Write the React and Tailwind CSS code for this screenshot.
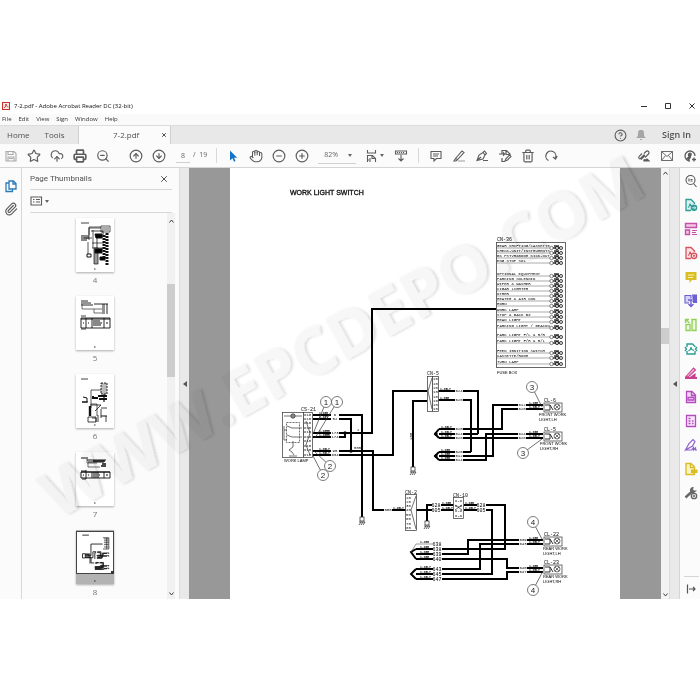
import {
  Star,
  CloudUpload,
  Printer,
  ZoomOut,
  CircleArrowUp,
  CircleArrowDown,
  Hand,
  CircleMinus,
  CirclePlus,
  Trash2,
  CircleHelp,
  Paperclip,
  X,
} from "lucide-react";

const fuseRows = [
  ["GEAR SHIFTING/CASSETTE", 247],
  ["CHECK-UNIT/INSTRUMENTS", 252],
  ["BK PSTVR&BOOM KICK-OUT", 257],
  ["ENG STOP SOL", 262],
  ["OPTIONAL EQUIPMENT", 275],
  ["PARKING SOLENOID", 280],
  ["WIPER & WASHER", 285],
  ["CIGAR LIGHTER", 290],
  ["OTHER", 295],
  ["HEATER & AIR CON", 300],
  ["HORN", 305],
  ["WORK LAMP", 311],
  ["STOP & BACK BZ", 316],
  ["HEAD LIGHT", 321],
  ["PARKING LIGHT / BEACON", 327],
  ["PARK LIGHT F/L & R/R", 336],
  ["PARK LIGHT F/R & R/L", 342],
  ["FEED IGNITION SWITCH", 352],
  ["CASSETTE/ROOM", 357],
  ["TURN LAMP", 363],
];

// every heavy wire on the sheet, in page coordinates
const wires = [
  "M313 415H362V517",
  "M313 419H351V451",
  "M313 433H372V309H496",
  "M313 437H345V433",
  "M313 451H373V510H406",
  "M313 455H393V391H427",
  "M427 401H413V467",
  "M438 391H478V434",
  "M438 400H471V452",
  "M439 429H502V409H543",
  "M439 434H478",
  "M439 438H543",
  "M439 452H471",
  "M439 456H493V405H543",
  "M439 460H486V434H543",
  "M416 510H454",
  "M427 521V505H454",
  "M464 505H505V549H416",
  "M464 510H492V574H416",
  "M416 554H468V540H543",
  "M416 559H507V568H543",
  "M416 569H480V544H543",
  "M416 579H507V572H543",
  "M439 429L435 434L439 438",
  "M439 452L435 456L439 460",
  "M416 549L411 552L416 559",
  "M416 569L411 574L416 579",
];

const wireLabels = [
  ["6", 335, 415], ["52", 335, 419], ["173", 335, 433], ["174", 335, 437],
  ["95", 335, 451], ["634", 335, 455], ["505", 388, 510],
  ["624", 459, 391], ["626", 459, 400],
  ["620", 459, 429], ["624", 459, 434], ["628", 459, 438],
  ["626", 459, 452], ["612", 459, 456], ["614", 459, 460],
  ["612", 522, 405], ["620", 522, 409], ["614", 522, 434], ["628", 522, 438],
  ["639", 523, 540], ["643", 523, 544], ["640", 523, 568], ["647", 523, 572],
];

// wires further apart carry a larger number
const wideLabels = [
  ["628", 436, 505], ["605", 436, 510], ["628", 481, 505], ["605", 481, 510],
  ["638", 437, 544], ["638", 437, 549], ["639", 437, 554], ["640", 437, 559],
  ["643", 437, 569], ["645", 437, 574], ["647", 437, 579],
];

const gauges = [
  ["1.25B", 319, 414], ["1.25Y", 319, 418], ["1.25RB", 319, 432], ["1.25RB", 319, 436],
  ["1.25LY", 319, 450], ["1.25LY", 319, 454], ["1.25LY", 393, 509],
  ["1.25LY", 440, 390], ["1.25B", 440, 399],
  ["1.25LY", 441, 428], ["1.25LY", 441, 433], ["1.25LY", 441, 437],
  ["1.25B", 441, 451], ["1.25B", 441, 455], ["1.25B", 441, 459],
  ["1.25B", 529, 404], ["1.25LY", 529, 408], ["1.25B", 529, 433], ["1.25LY", 529, 437],
  ["1.25B", 442, 504], ["1.25LY", 442, 509], ["1.25B", 465, 504], ["1.25LY", 465, 509],
  ["1.25B", 420, 543], ["1.25B", 420, 548], ["1.25B", 420, 553], ["1.25B", 420, 558],
  ["1.25LY", 420, 568], ["1.25LY", 420, 573], ["1.25LY", 420, 578],
  ["1.25B", 529, 539], ["1.25LY", 529, 543], ["1.25B", 529, 567], ["1.25LY", 529, 571],
];

const lamps = [
  { name: "CL-6", y: 403, line1: "FRONT WORK", line2: "LIGHT,LH", tx: 539 },
  { name: "CL-5", y: 432, line1: "FRONT WORK", line2: "LIGHT,RH", tx: 540 },
  { name: "CL-22", y: 537, line1: "REAR WORK", line2: "LIGHT,LH", tx: 543 },
  { name: "CL-23", y: 565, line1: "REAR WORK", line2: "LIGHT,RH", tx: 543 },
];

const callouts = [
  ["1", 326, 402, 313, 434],
  ["1", 337, 402, 315, 438],
  ["2", 330, 466, 314, 451],
  ["2", 323, 475, 313, 456],
  ["3", 532, 387, 542, 407],
  ["3", 523, 453, 542, 439],
  ["4", 533, 522, 543, 541],
  ["4", 533, 590, 543, 571],
];

function Ground({ x, y }) {
  return (
    <g stroke="#222" strokeWidth="0.7" fill="none">
      <rect x={x - 2} y={y - 1} width="4" height="4" fill="#fff" />
      <path d={`M${x - 3} ${y + 4}h6M${x - 3} ${y + 7}l2-3M${x - 1} ${y + 7}l2-3M${x + 1} ${y + 7}l2-3`} />
    </g>
  );
}

function Diagram() {
  return (
    <svg viewBox="230 168 390 431" className="block w-[390px] shrink-0 bg-white" role="img" aria-label="Work light switch wiring diagram">
      <text x="290" y="195" fontSize="7" stroke="#111" strokeWidth="0.3" className="font-['Liberation_Sans',sans-serif]">WORK LIGHT SWITCH</text>

      {/* fuse box */}
      <g className="font-['Liberation_Mono',monospace]" fill="#000">
        <text x="497" y="241" fontSize="5">CN-36</text>
        <rect x="496.5" y="242.5" width="69" height="125" fill="none" stroke="#444" strokeWidth="0.8" />
        {fuseRows.map(([label, y]) => (
          <g key={label}>
            <text x="497" y={y} fontSize="4">{label}</text>
            <path d={`M496 ${y + 1}h54`} stroke="#555" strokeWidth="0.5" />
            <path d={`M553 ${y + 1}h8M554 ${y - 1}h5`} stroke="#333" strokeWidth="1.3" />
            <circle cx="551.5" cy={y + 1} r="1.7" fill="#fff" stroke="#333" strokeWidth="0.6" />
            <circle cx="557" cy={y + 1} r="1.6" fill="#ccc" stroke="#111" strokeWidth="0.8" />
            <circle cx="561" cy={y + 1} r="1.6" fill="#ccc" stroke="#111" strokeWidth="0.7" />
          </g>
        ))}
      </g>

      <g fill="none" stroke="#000" strokeWidth="2">
        {wires.map((d) => <path key={d} d={d} />)}
      </g>
      <path d="M411 552L416 544H433" fill="none" stroke="#555" strokeWidth="0.6" />
      <circle cx="345" cy="433" r="1.7" />
      <circle cx="351" cy="451" r="1.7" />
      <circle cx="436" cy="434" r="1.7" />
      <circle cx="436" cy="456" r="1.7" />

      {/* work lamp switch */}
      <g fill="none" stroke="#333" strokeWidth="0.7">
        <rect x="282.5" y="412.5" width="21" height="45" />
        <rect x="303.5" y="412.5" width="9" height="45" fill="#fff" />
        <path d="M284 416h18M289 456h8M293 441v6l-4 3 3 2 2 3" />
        <path d="M286.5 422.500h13v20h-13z" strokeDasharray="2 1" />
        <path d="M287 426l5 2h10M287 435l5 2h10M284 426v14M284 430h3M284 440h3" />
        <circle cx="293" cy="416" r="2.2" fill="#888" />
        <path d="M306 421l4 12-4 12 4 10" />
      </g>
      <g className="font-['Liberation_Mono',monospace]" fontSize="4" fill="#111">
        <text x="301" y="411" fontSize="5">CS-21</text>
        {[416, 420, 424, 429, 433, 438, 442, 447, 451, 456].map((y) => (
          <text key={y} x="304" y={y}>o10</text>
        ))}
      </g>

      {/* connectors */}
      <g fill="#fff" stroke="#333" strokeWidth="0.7">
        <rect x="427.5" y="376.5" width="5" height="35" />
        <path d="M432 378l-4 13 4 18" />
        <rect x="432.5" y="376.5" width="6" height="35" />
        <rect x="405.5" y="494.5" width="11" height="36" />
        <path d="M416 496l-5 14 5 19" />
        <rect x="453.5" y="497.5" width="10" height="21" />
        <path d="M455 505l7 5M455 510l7-5" />
      </g>
      <g className="font-['Liberation_Mono',monospace]" fontSize="4" fill="#111">
        <text x="427" y="375" fontSize="5">CN-5</text>
        <text x="405" y="494" fontSize="5">CN-2</text>
        <text x="453" y="497" fontSize="5">CN-10</text>
        {[380, 385, 389, 393, 398, 402, 406, 410].map((y) => <text key={y} x="433" y={y}>10</text>)}
        {[499, 503, 507, 511, 516, 520, 525, 529].map((y, i) => <text key={y} x="406" y={y}>{i + 1}0</text>)}
        {[502, 507, 512, 517].map((y) => <text key={y} x="455" y={y}>o-o</text>)}
        <text x="412" y="440" transform="rotate(-90 412 440)">100</text>
        <text x="357" y="431">2</text>
        <text x="354" y="449">505</text>
      </g>

      <g className="font-['Liberation_Mono',monospace]" fontSize="4" fill="#000">
        {gauges.map(([label, x, y]) => (
          <text key={`${x}-${y}`} x={x} y={y} fontSize="3" stroke="#000" strokeWidth="0.1">{label}</text>
        ))}
        {wireLabels.map(([label, x, y]) => (
          <g key={`${x}-${y}`}>
            <rect x={x - 4} y={y - 2} width="8" height="4" fill="#fff" />
            <text x={x} y={y + 1} textAnchor="middle">{label}</text>
          </g>
        ))}
        {wideLabels.map(([label, x, y]) => (
          <g key={`${x}-${y}`}>
            <rect x={x - 4} y={y - 2} width="9" height="4" fill="#fff" />
            <text x={x} y={y + 2} fontSize="5" textAnchor="middle">{label}</text>
          </g>
        ))}
      </g>

      {lamps.map(({ name, y, line1, line2, tx }) => (
        <g key={name}>
          <g fill="#fff" stroke="#333" strokeWidth="0.7">
            <rect x="544" y={y} width="18" height="9" />
            <path d={`M545 ${y + 2}h5v5h-5M550 ${y + 2}l3 5`} strokeWidth="1" />
            <circle cx="557" cy={y + 4} r="3" />
            <path d={`M555 ${y + 2}l4 4M559 ${y + 2}l-4 4`} />
          </g>
          <text x="544" y={y - 1} fontSize="5" className="font-['Liberation_Mono',monospace]">{name}</text>
          <g fontSize="4" className="font-['Liberation_Sans',sans-serif]">
            <text x={tx} y={y + 13}>{line1}</text>
            <text x={tx} y={y + 18}>{line2}</text>
          </g>
        </g>
      ))}

      <Ground x={362} y={518} />
      <Ground x={413} y={468} />
      <Ground x={427} y={522} />

      <g fontSize="4" className="font-['Liberation_Sans',sans-serif]">
        <text x="497" y="374">FUSE BOX</text>
        <text x="284" y="462">WORK LAMP</text>
      </g>

      {callouts.map(([n, cx, cy, x2, y2]) => (
        <g key={`${cx}-${cy}`}>
          <path d={`M${cx} ${cy}L${x2} ${y2}`} stroke="#333" strokeWidth="0.7" />
          <circle cx={cx} cy={cy} r="5.5" fill="#fff" stroke="#444" strokeWidth="0.7" />
          <text x={cx} y={cy + 3} fontSize="8" textAnchor="middle" fill="#222" className="font-['Liberation_Sans',sans-serif]">{n}</text>
        </g>
      ))}
    </svg>
  );
}

const sheet4 = (
  <g fill="none" stroke="#111">
    <path d="M5 5h8" strokeWidth="0.8" />
    <path d="M13 22V9h12M12 24v12M17 12v18M8 20h8M16 25h12M13 17v-7h12M16 30h14" strokeWidth="0.7" />
    <path d="M15 13h12v6h-6v12h6" strokeWidth="0.8" />
    <path d="M25 8h9v6h-9zM26 10h7M26 12h7" strokeWidth="0.7" />
    <path d="M5 18h8M5 20h8M5 22h6M11 36h4v3h-4z" strokeWidth="1" />
    <path d="M18 30h4v16h-4z" fill="#999" strokeWidth="0.7" />
    <path d="M19 16h7v4h-6zM19 31h7v4h-7zM24 39h5v3h-5z" fill="#000" />
    <path d="M31 15v33M28 17v24" strokeWidth="3" strokeDasharray="2 1" />
  </g>
);

const sheet5 = (
  <g fill="none" stroke="#111">
    <path d="M5 5h7M5 7h10M5 9h12M18 8h14" strokeWidth="0.9" />
    <path d="M6 8v5h20M18 13v4h8" strokeWidth="0.6" />
    <path d="M26 9h6M26 11h6M26 13h6M26 15h6M26 17h6" strokeWidth="0.9" strokeDasharray="3 1" />
    <path d="M5 22h29v10H5zM10 22v10M16 22v10M28 22v10" strokeWidth="0.9" />
    <path d="M5 23h29M17 25h7M17 27h9M17 29h8M7 27h1M12 27h1M30 27h2" strokeWidth="1" />
    <path d="M5 33h5M5 20h5" strokeWidth="0.8" />
  </g>
);

const sheet6 = (
  <g fill="none" stroke="#111">
    <path d="M5 5h7" strokeWidth="0.8" />
    <path d="M15 34V16h10M15 30h6v12" strokeWidth="0.7" />
    <path d="M25 9h6v11h-6z" fill="#bbb" strokeWidth="0.9" strokeDasharray="2 1" />
    <path d="M7 23l4 1v4H6M6 28h6" strokeWidth="1" />
    <path d="M17 24h5M22 22h9M23 25h8M17 22v3" strokeWidth="2" />
    <path d="M14 32v10" strokeWidth="2.4" />
    <path d="M14 31h11l-6 6M12 43h8v5h-8zM25 35v9M25 34h6M30 42v6M22 41v7M16 44h4v4" strokeWidth="0.8" />
    <path d="M28 20v8M25 42h6" strokeWidth="1.2" />
  </g>
);

const sheet7 = (
  <g fill="none" stroke="#111">
    <path d="M5 6h7M11 8h19M12 10h16" strokeWidth="1" />
    <path d="M11 7v4h10M12 11v4h12" strokeWidth="0.6" />
    <path d="M17 9h12M26 12h4M25 14h5" strokeWidth="1.5" />
    <path d="M5 20h29v6H5zM10 18v9M16 20v6M28 20v6M6 27h4M5 19h5" strokeWidth="0.9" />
    <path d="M17 21h6M17 23h7M17 25h6M7 23h1M12 23h1M30 23h2M5 20h29" strokeWidth="1" />
  </g>
);

const sheet8 = (
  <g transform="translate(-20 -15) scale(0.094)" fill="none" stroke="#111" strokeWidth="9">
    {wires.map((d) => <path key={d} d={d} />)}
    <path d="M500 242h62v120h-62M510 255h50M510 275h50M510 295h50M510 315h50M510 340h50M540 242v120" strokeWidth="7" />
    <path d="M282 412h30v45h-30zM545 403h16v10M545 432h16v10M545 537h16v10M545 565h16v10" />
    <path d="M280 214h70" />
  </g>
);

const pages = [
  { n: 4, art: sheet4 },
  { n: 5, art: sheet5 },
  { n: 6, art: sheet6 },
  { n: 7, art: sheet7 },
  { n: 8, art: sheet8, current: true },
];

function Thumbnail({ n, art, current }) {
  return (
    <li className="flex flex-col items-center">
      <button className={`shadow-[0_1px_2px_#aaa] ${current ? "bg-[#b3b3b3]" : "bg-white"}`} aria-label={`Page ${n}`}>
        <svg viewBox="0 0 38 54" className="block h-[54px] w-[38px]">
          {current && <rect x="0.5" y="1.5" width="37" height="42" fill="#fff" stroke="#444" />}
          {art}
          {current && <rect x="35" y="41" width="3" height="3" fill="#333" />}
          <path d="M18 51h1.500" stroke="#333" />
        </svg>
      </button>
      <span className="h-6 pt-px text-[8px] leading-[14px] text-[#777]">{n}</span>
    </li>
  );
}

function Caret() {
  return (
    <svg viewBox="0 0 4 3" className="h-[3px] w-1 fill-[#666]">
      <path d="M0 0h4l-2 3z" />
    </svg>
  );
}

function Chevron({ down }) {
  return (
    <svg viewBox="0 0 5 4" className={`h-1 w-[5px] fill-none stroke-[#444] ${down ? "rotate-180" : ""}`}>
      <path d="M0.500 3.500l2-2.500 2 2.500" />
    </svg>
  );
}

// 12 unit drawing with a unit of air on each side
function Icon({ children, className = "text-[#5c5c5c]" }) {
  return (
    <svg viewBox="-1 -1 14 14" className={`size-[14px] shrink-0 ${className}`} fill="none" stroke="currentColor" strokeWidth="1.1">
      {children}
    </svg>
  );
}

function Tool({ label, children }) {
  return (
    <button aria-label={label} className="flex shrink-0 items-center gap-px">
      {children}
    </button>
  );
}

const lucide = { size: 14, strokeWidth: 2, color: "#5c5c5c" };

function Toolbar() {
  return (
    <div className="flex h-6 items-center justify-between border-b border-[#d5d5d5] bg-[#fbfbfb] pr-[3px] pl-1 text-[#666]">
      <div className="flex items-center gap-[9px]">
        <Tool label="Save">
          <Icon className="text-[#aaa]">
            <path d="M1 1.500h8l2 2v7.500H1zM3 1.500v3h5v-3M3 11V7h6v4M4 8.500h4" />
          </Icon>
        </Tool>
        <Tool label="Star"><Star {...lucide} /></Tool>
        <Tool label="Upload"><CloudUpload {...lucide} /></Tool>
        <Tool label="Print"><Printer {...lucide} strokeWidth={2.8} /></Tool>
        <Tool label="Find"><ZoomOut {...lucide} /></Tool>
        <div className="ml-[10px] flex gap-[9px]">
          <Tool label="Previous page"><CircleArrowUp {...lucide} /></Tool>
          <Tool label="Next page"><CircleArrowDown {...lucide} /></Tool>
        </div>
        <label className="ml-px flex items-center text-[7px]">
          <input aria-label="Page number" defaultValue="8" className="h-[15px] w-[14px] border-b border-[#d0d0d0] bg-transparent text-center" />
          <span className="ml-[3px] whitespace-pre">/  19</span>
        </label>
        <div className="h-[15px] w-px bg-[#d8d8d8]" />
        <Tool label="Select">
          <Icon className="text-[#1473c8]">
            <path d="M3 0.500v10l2.500-2.300 1.500 3.500 1.500-.8-1.500-3.200h3.200z" fill="currentColor" stroke="none" />
          </Icon>
        </Tool>
        <Tool label="Pan"><Hand {...lucide} strokeWidth={1.8} /></Tool>
        <Tool label="Zoom out"><CircleMinus {...lucide} /></Tool>
        <Tool label="Zoom in"><CirclePlus {...lucide} /></Tool>
        <button className="flex h-4 w-[38px] items-center justify-between border-b border-[#d0d0d0] px-1 text-[7px]">
          <span className="pl-[2px]">82%</span>
          <Caret />
        </button>
        <Tool label="Fit page">
          <Icon>
            <path d="M1.500 0v3h8V0M1.500 12V5.500h5l3 3V12M6 5.500v3h3.500M4 8v4M1 10h2" />
          </Icon>
          <Caret />
        </Tool>
        <div className="flex items-center gap-[10px] pl-px">
          <Tool label="Scroll mode">
            <Icon>
              <path d="M0.500 1h11v3h-11zM2.500 2v1M4.500 2v1M6.500 2v1M8.500 2v1M6 5v6M3.500 8.500L6 11l2.500-2.500" />
            </Icon>
          </Tool>
          <div className="h-[15px] w-px bg-[#d8d8d8]" />
          <Tool label="Comment">
            <Icon>
              <path d="M1 1.500h10v7H6.500L4 11V8.500H1zM3 4h6M3 6h5" />
            </Icon>
          </Tool>
        </div>
        <Tool label="Highlight">
          <Icon>
            <path d="M2.500 8.500L9 1l2 1.500-6.500 7zM2.500 8.500L1 11h2l1.500-1.500" />
            <path d="M5 11h7" stroke="#bbb" strokeWidth="1.500" />
          </Icon>
        </Tool>
        <Tool label="Sign">
          <Icon>
            <path d="M1 10.500L3 5l4-2.500 2 2.500-2 4zM1 10.500l4-3.500M7 2.500L8.500 1l2 2.500L9 5M7 10.500h5" />
          </Icon>
        </Tool>
        <Tool label="Stamp">
          <Icon>
            <path d="M3 4V0.500h4.500L11 4v2M3 8v3.500h3M7 1v3.500h4" strokeWidth="1.200" />
            <path d="M0 3.500h4v-2L6.500 4 4 6.500v-2H0z" fill="currentColor" stroke="none" />
            <path d="M6 11l1-2.500L10.500 5l1.500 1.500L8.500 10z" />
          </Icon>
        </Tool>
        <Tool label="Delete"><Trash2 {...lucide} /></Tool>
        <Tool label="Rotate">
          <Icon>
            <path d="M3.500 10.500A5 5 0 1 1 10.500 8M8 7l2.500 2 1.700-3" strokeWidth="1.200" />
          </Icon>
        </Tool>
      </div>
      <div className="flex items-center gap-[9px]">
        <Tool label="Share link">
          <Icon>
            <path d="M6 3.500l2-2a1.700 1.700 0 0 1 2.500 2.500L7 7.500M6.500 4.500L2 9a1.700 1.700 0 0 1-1-2.500L4 3.500M3 9.500l4-4" />
            <path d="M5.500 11.500c-1-2 1-3 2-2 1-2 3.500-.5 3 .5 1.500 0 1.500 1.500 1.500 1.500z" fill="currentColor" stroke="none" />
          </Icon>
        </Tool>
        <Tool label="Mail">
          <Icon>
            <path d="M0.500 1.500h11v9h-11zM0.500 1.500L6 6.500l5.500-5M0.500 10.500l4-5M11.500 10.500l-4-5" strokeWidth="0.900" />
          </Icon>
        </Tool>
        <Tool label="Add person">
          <Icon>
            <path d="M6 11A5 5 0 1 1 11 6M8 9.500h4M10 7.500v4" strokeWidth="1.300" />
            <path d="M6 2.500c2.500 0 2 3 1 4v1l-2 3-3-2 2.500-2C3.500 6 3.500 2.500 6 2.500z" fill="currentColor" stroke="none" />
          </Icon>
        </Tool>
      </div>
    </div>
  );
}

function SidePanel() {
  return (
    <aside className="flex w-[21px] shrink-0 flex-col items-center gap-[10px] border-l border-[#d5d5d5] bg-[#fbfbfb] pt-[6px] pb-[3px] pl-[2px]">
      <Tool label="Search tools">
        <Icon className="text-[#555]">
          <circle cx="5.500" cy="5" r="4.500" />
          <path d="M8.500 8.500l3 3.500M4 3.500v3M5.500 4.500h2M5.500 6h2" />
        </Icon>
      </Tool>
      <Tool label="Export PDF">
        <Icon className="text-[#2d9d95]">
          <path d="M6 11.500H1V0.500H6l3.500 3.500v1" fill="#d9f0ee" strokeWidth="1.300" />
          <path d="M3 8.500c1.500-1 2-2.500 2-4 0 1.500 1 2.500 2.500 3" />
          <circle cx="9" cy="8.800" r="3.300" fill="currentColor" stroke="none" />
          <path d="M7.200 8.800h3.200M9.500 7.500l1.200 1.300-1.200 1.300" stroke="#fff" strokeWidth="0.800" />
        </Icon>
      </Tool>
      <Tool label="Organize pages">
        <Icon className="text-[#c650a8]">
          <path d="M0.500 0.500h11v4h-11zM0.500 7h4v4.500h-4z" fill="#f3c6e8" strokeWidth="1.400" />
          <path d="M7 7.500h5M7 9.500h4M7 11.500h5" />
        </Icon>
      </Tool>
      <Tool label="Create PDF">
        <Icon className="text-[#d8525c]">
          <path d="M6 11.500H1V0.500H6l3.500 3.500v1" fill="#fbe3e4" strokeWidth="1.300" />
          <path d="M3 8.500c1.500-1 2-2.500 2-4 0 1.500 1 2.500 2.500 3" />
          <circle cx="9" cy="8.800" r="2.700" fill="#fff" strokeWidth="1.400" />
          <path d="M7.800 8.800h2.400M9 7.600V10" />
        </Icon>
      </Tool>
      <Tool label="Comment tool">
        <Icon className="text-[#d9bd27]">
          <path d="M0.500 1h11v8H7l-2.500 3V9h-4z" fill="currentColor" stroke="none" />
          <path d="M3 4h6M3 6.500h5" stroke="#fff3b0" />
        </Icon>
      </Tool>
      <Tool label="Combine files">
        <Icon className="text-[#6a5fd3]">
          <path d="M4 8H0V0.500H6v3M7 0h4.500v7.500H8" fill="#d5d1f7" />
          <path d="M7.500 0H12v7H7.500z" fill="currentColor" stroke="none" />
          <path d="M3 5h4M6 5v6.500M3.500 9L6 11.500 8.500 9" strokeWidth="1.400" />
        </Icon>
      </Tool>
      <Tool label="Edit PDF">
        <Icon className="text-[#8fd055]">
          <path d="M7 0.500h4v11H7zM1 5.500h4v6H1z" fill="#ecf9df" strokeWidth="1.300" />
          <path d="M0.500 4V0.500H4M0.500 0.500l4 3.500" strokeWidth="1.300" />
        </Icon>
      </Tool>
      <Tool label="Compress PDF">
        <Icon className="text-[#2d9d95]">
          <path d="M2 4V1h5.500L10 3.500V4M2 8v3h8V8M0 4l1.500 2L0 8M12 4l-1.500 2L12 8" strokeWidth="1.400" />
          <path d="M3.500 8c2-1 2.500-2.500 2.500-4 0 2 1 3 3 3.500" />
        </Icon>
      </Tool>
      <Tool label="Redact">
        <Icon className="text-[#c8408f]">
          <path d="M1 9.500L8.500 1l2 2-7 6.700z" fill="#f0b6d8" />
          <path d="M0 11h12" strokeWidth="2" />
          <path d="M6 10l4-3v3z" fill="currentColor" />
        </Icon>
      </Tool>
      <Tool label="Scan">
        <Icon className="text-[#b44cc0]">
          <path d="M1.500 0.500H7l3.500 3.500v7.500h-9z" fill="#f0d7f3" strokeWidth="1.300" />
          <path d="M3 6.500h6V9H3zM6.500 1v3.500H10" strokeWidth="1.300" />
        </Icon>
      </Tool>
      <Tool label="Prepare form">
        <Icon className="text-[#b44cc0]">
          <path d="M1.500 0.500h9v11h-9z" fill="#f7e8f9" strokeWidth="1.300" />
          <path d="M3.500 3.500h2M3.500 6h2M3.500 8.500h2M7 6h1.500M7 8.500h1.500" strokeWidth="1.400" />
        </Icon>
      </Tool>
      <Tool label="Fill and sign">
        <Icon className="text-[#9060cf]">
          <path d="M0.500 11L4 4.500 8 0.500l2 2L7.500 7zM0.500 11h6l2-2.500v2.500l2-2v2H12" strokeWidth="1.200" />
        </Icon>
      </Tool>
      <Tool label="Send for comments">
        <Icon className="text-[#d9bd27]">
          <path d="M1 0.500h5L9.500 4v7.500H1zM5.500 0.500v4h4" fill="#fbf3bf" strokeWidth="1.400" />
          <path d="M6 6.500h6.500V10H9.500L8 11.500V10H6z" fill="currentColor" stroke="none" />
        </Icon>
      </Tool>
      <Tool label="More tools">
        <Icon className="text-[#666]">
          <path d="M0.500 10.500L7 4.500" strokeWidth="2.400" />
          <path d="M8 0.500a2.500 2.500 0 0 0-2 4L8 6l2.500-2-2 0-1-1z" fill="currentColor" />
          <circle cx="9" cy="9" r="2.700" fill="#fbfbfb" strokeWidth="1.300" />
          <path d="M7.700 9h2.600M9 7.700v2.600" />
        </Icon>
      </Tool>
      <div className="mt-auto flex w-[15px] justify-center border-t border-[#d5d5d5] pt-[5px]">
        <Tool label="Collapse panel">
          <Icon className="text-[#555]">
            <path d="M2.500 1.500v9M4 6h6M8 4l2 2-2 2" strokeWidth="1.200" />
          </Icon>
        </Tool>
      </div>
    </aside>
  );
}

function Handle() {
  return (
    <div className="flex w-[10px] shrink-0 items-center justify-center border-l border-[#dcdcdc] bg-[#e9e9e9]">
      <button aria-label="Toggle panel">
        <svg viewBox="0 0 4 6" className="h-[6px] w-1 fill-[#555]"><path d="M4 0v6L0 3z" /></svg>
      </button>
    </div>
  );
}

function Watermark() {
  return (
    <svg viewBox="0 0 700 700" className="pointer-events-none absolute inset-0 size-full mix-blend-multiply" aria-hidden="true">
      <defs>
        <filter id="emboss" x="-5%" y="-20%" width="110%" height="140%">
          <feGaussianBlur in="SourceAlpha" stdDeviation="1.5" result="soft" />
          <feOffset in="soft" dx="2" dy="1" result="shade" />
          <feFlood floodColor="#000" floodOpacity="0.24" />
          <feComposite in2="shade" operator="in" result="shadow" />
          <feMerge>
            <feMergeNode in="shadow" />
            <feMergeNode in="SourceGraphic" />
          </feMerge>
        </filter>
      </defs>
      <g transform="rotate(-28.900 57 520)">
        <text x="57" y="520" fontSize="65" fill="#f4f4f4" filter="url(#emboss)" opacity="0.7" className="font-['Open_Sans',sans-serif] font-bold">WWW.EPCDEPO.COM</text>
      </g>
    </svg>
  );
}

function App() {
  return (
    <div className="relative min-h-screen bg-white pt-[98px] font-['Open_Sans','Noto_Sans',sans-serif] text-[#505050]">
      <header className="flex h-4 items-center justify-between px-[2px]">
        <div className="flex items-center gap-1">
          <svg viewBox="0 0 8 8" className="size-2" fill="none" stroke="#c8342c">
            <rect x="0.500" y="0.500" width="7" height="7" fill="#fbe9e8" />
            <path d="M2 6c1.500-1 2-2.500 2-4 0 2 1 2.500 2.500 3" />
          </svg>
          <h1 className="text-[6px] leading-4 text-[#111]">7-2.pdf - Adobe Acrobat Reader DC (32-bit)</h1>
        </div>
        <div className="flex items-center gap-[18px] pr-[3px]">
          <button aria-label="Minimize"><svg viewBox="0 0 6 6" className="size-[6px] stroke-[#333]"><path d="M0 3.500h6" /></svg></button>
          <button aria-label="Maximize"><svg viewBox="0 0 6 6" className="size-[6px] fill-none stroke-[#333]"><path d="M0.500 0.500h5v5h-5z" /></svg></button>
          <button aria-label="Close window"><svg viewBox="0 0 6 6" className="size-[6px] stroke-[#333]"><path d="M0.500 0.500l5 5M5.500 0.500l-5 5" /></svg></button>
        </div>
      </header>
      <nav className="flex h-[11px] items-center gap-[7px] bg-[#fafafa] px-[2px] text-[6px] leading-[11px] text-[#333]">
        <button>File</button>
        <button>Edit</button>
        <button>View</button>
        <button>Sign</button>
        <button>Window</button>
        <button>Help</button>
      </nav>

      <div className="flex h-[19px] items-stretch border-t border-[#dcdcdc] bg-[#e8e8e8] text-[8px]">
        <div className="flex w-[78px] items-center gap-[15px] pl-[7px]">
          <button>Home</button>
          <button>Tools</button>
        </div>
        <div className="flex w-[93px] items-center justify-between border-x border-[#d0d0d0] bg-[#fbfbfb] pr-[3px] pl-[34px]">
          <span>7-2.pdf</span>
          <button aria-label="Close tab"><X size={6} strokeWidth={4} /></button>
        </div>
        <div className="ml-auto flex items-center pr-[9px]">
          <CircleHelp size={13} strokeWidth={2} color="#5c5c5c" />
          <svg viewBox="0 0 12 12" className="ml-[8px] size-3 fill-[#a5a5a5]">
            <path d="M6 1c3 0 3 2 3 4 0 2 .5 3 2 4H1c1.500-1 2-2 2-4 0-2 0-4 3-4zM5 10h2v1H5z" />
          </svg>
          <button className="ml-[15px] text-[9px] font-semibold">Sign In</button>
        </div>
      </div>

      <Toolbar />

      <div className="flex">
        <div className="flex w-[22px] shrink-0 flex-col items-center gap-[9px] border-r border-[#d8d8d8] bg-[#fbfbfb] pt-[11px]">
          <Tool label="Page thumbnails">
            <Icon className="text-[#2b7bb9]">
              <path d="M4 1h4.500L11 3.500V9H4zM8 1v3h3M4 3H1v8.500h6.500V9" strokeWidth="1.300" />
            </Icon>
          </Tool>
          <Tool label="Attachments"><Paperclip {...lucide} /></Tool>
        </div>

        <div className="flex w-[157px] shrink-0 flex-col bg-[#fbfbfb] pl-2">
          <div className="mr-[7px] flex h-[22px] items-center justify-between border-b border-[#d8d8d8] pr-[3px]">
            <h2 className="font-['Roboto','Noto_Sans',sans-serif] text-[8px]">Page Thumbnails</h2>
            <button aria-label="Close panel"><X size={10} strokeWidth={2.4} /></button>
          </div>
          <div className="mr-[7px] flex h-[23px] items-center border-b border-[#d8d8d8]">
            <Tool label="Options">
              <Icon>
                <path d="M0 2h10.500v8H0zM2 4.500h1.500M5 4.500h4M2 7h1.500M5 7h4" />
              </Icon>
              <Caret />
            </Tool>
          </div>
          <div className="flex grow justify-end">
            <ul className="mr-[51px] h-[386px] overflow-hidden px-[2px] pt-[5px]">
              {pages.map((p) => <Thumbnail key={p.n} {...p} />)}
            </ul>
            <div className="mr-1 flex w-2 flex-col items-center bg-[#f1f1f1] pt-[6px] pb-[3px]">
              <Chevron />
              <div className="mt-[61px] h-[93px] w-full bg-[#cdcdcd]" />
              <div className="mt-auto flex"><Chevron down /></div>
            </div>
          </div>
        </div>
        <Handle />

        <main className="flex min-w-0 grow justify-center bg-[#989898]">
          <Diagram />
        </main>
        <div className="flex w-2 shrink-0 flex-col items-center bg-[#f3f3f3] pt-[3px] pb-[2px]">
          <Chevron />
          <div className="mt-[153px] h-4 w-full bg-[#cdcdcd]" />
          <div className="mt-auto flex"><Chevron down /></div>
        </div>
        <Handle />
        <SidePanel />
      </div>

      <Watermark />
    </div>
  );
}

export default App;
